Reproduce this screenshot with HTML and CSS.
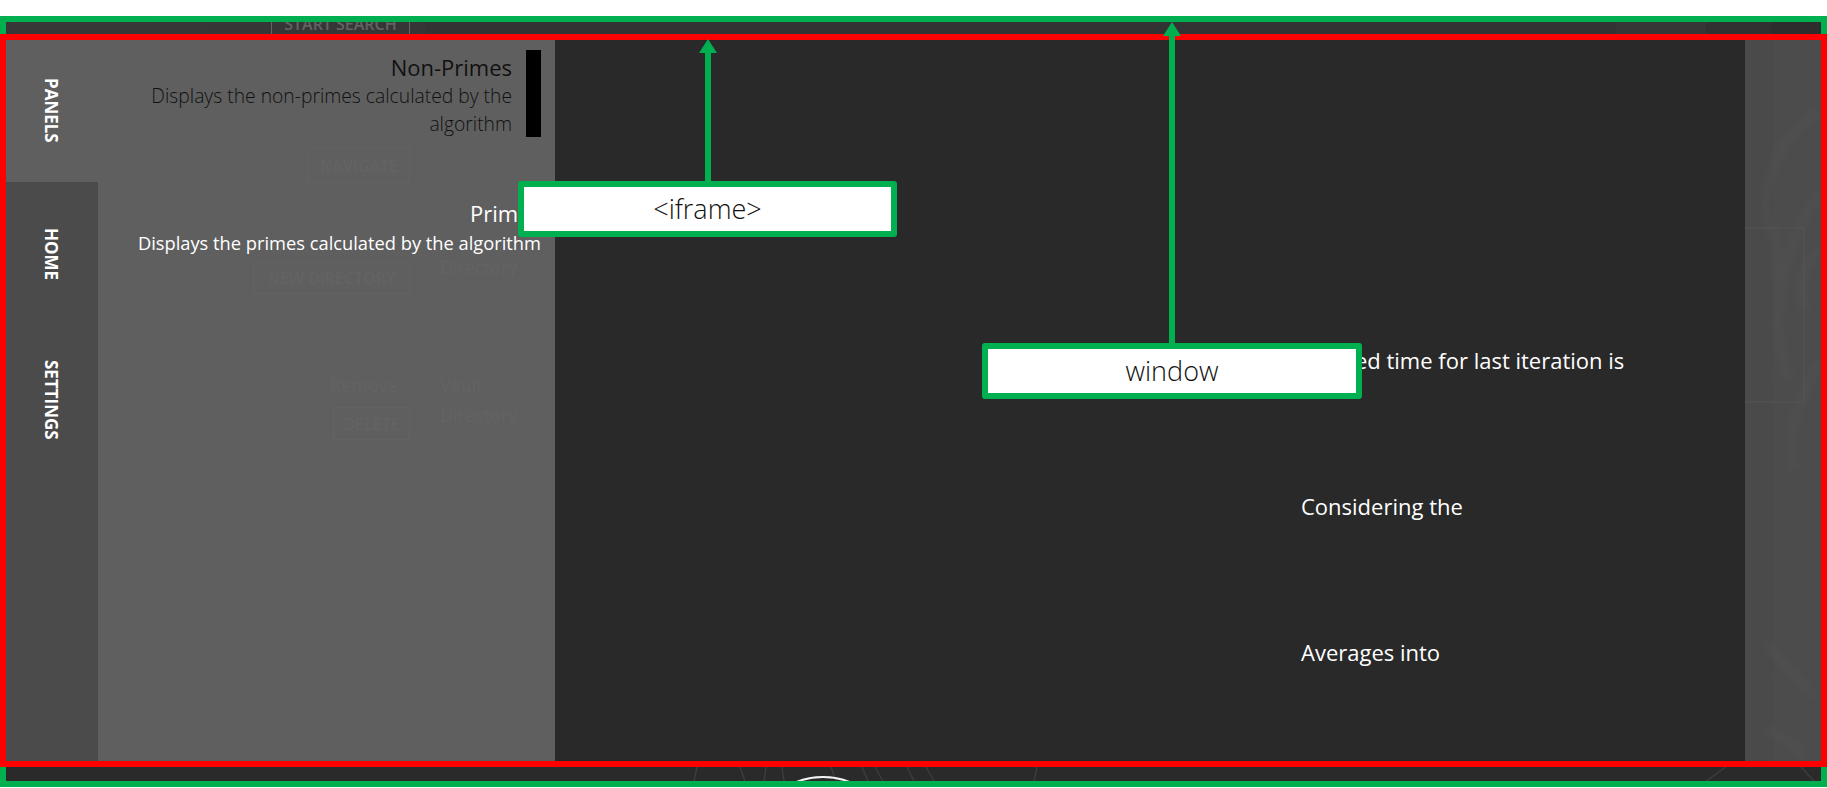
FILE: index.html
```html
<!DOCTYPE html>
<html lang="en">
<head>
  <meta charset="UTF-8">
  <meta name="viewport" content="width=device-width, initial-scale=1.0">
  <title>iframe inside window</title>
  <link rel="stylesheet" href="styles.css">
</head>
<body>

<div class="window">
  <div class="top-strip">
    <span class="ghost-btn search-btn">START SEARCH</span>
  </div>

  <div class="frame">
    <nav class="rail">
      <div class="tab tab-panels">PANELS</div>
      <div class="tab tab-home">HOME</div>
      <div class="tab tab-settings">SETTINGS</div>
    </nav>

    <section class="panel">
      <!-- page behind the panel shows through faintly -->
      <span class="ghost-btn ghost-navigate">NAVIGATE</span>
      <span class="ghost-btn ghost-newdir">NEW DIRECTORY</span>
      <span class="ghost ghost-dir1">Directory</span>
      <span class="ghost ghost-remove">Remove</span>
      <span class="ghost ghost-vault">Vault</span>
      <span class="ghost-btn ghost-delete">DELETE</span>
      <span class="ghost ghost-dir2">Directory</span>

      <div class="item item-active">
        <h2>Non-Primes</h2>
        <p>Displays the non-primes calculated by the algorithm</p>
      </div>
      <div class="item item-plain">
        <h2>Primes</h2>
        <p>Displays the primes calculated by the algorithm</p>
      </div>
    </section>

    <main class="main">
      <p>Elapsed time for last iteration is</p>
      <p>Considering the</p>
      <p>Averages into</p>
    </main>

    <aside class="side">
      <div class="side-box"></div>
      <svg class="smoke" width="76" height="721" viewBox="0 0 76 721" fill="none">
        <g stroke="#5c5e5d" stroke-width="5" opacity="0.35">
          <path d="M76 70C50 85 30 110 22 150S40 190 30 240" />
          <path d="M76 150C60 175 50 190 40 230S30 300 44 340" />
          <path d="M76 210C60 220 50 240 60 270" />
          <path d="M76 320C60 350 40 380 48 430" />
          <path d="M20 600C35 620 50 640 70 655" />
          <path d="M20 690C35 695 50 705 60 721" />
        </g>
      </svg>
    </aside>
  </div>

  <div class="bottom-strip">
    <svg class="bottom-art" width="1815" height="14" viewBox="0 0 1815 14" fill="none">
      <g stroke="#3a3e3e" stroke-width="1.5">
        <path d="M691 0L688 14" />
        <path d="M734 0L739 14" />
        <path d="M760 0L758 14" />
        <path d="M776 0L778 14" />
        <path d="M825 0L830 14" />
        <path d="M856 0L862 14" />
        <path d="M869 0L877 14" />
        <path d="M901 0L908 14" />
        <path d="M920 0L928 14" />
        <path d="M1031 0L1028 14" />
        <path d="M1720 0L1700 14" />
        <path d="M1795 0L1808 14" />
      </g>
      <circle cx="817" cy="80" r="70" stroke="#f2f2f2" stroke-width="2" />
    </svg>
  </div>

  <div class="callout callout-iframe">&lt;iframe&gt;</div>
  <div class="callout callout-window">window</div>
</div>

</body>
</html>
```

FILE: styles.css
```css
html, body {
  margin: 0;
  height: 100%;
  background-color: #ffffff;
  overflow: hidden;
}

body {
  padding-top: 16px;
  box-sizing: border-box;
  font-family: "Open Sans", "Noto Sans", sans-serif;
}

.window {
  position: relative;
  height: 771px;
  box-sizing: border-box;
  border: 6px solid #00b050;
  background-color: #2a2a2a;
}

.top-strip {
  position: relative;
  height: 12px;
  overflow: hidden;
  background: linear-gradient(to right, #373737 0, #363636 420px, #333333 420px, #333333 1610px, #363636 1610px, #363636 1700px, #313131 1700px, #313131 1765px, #2d2d2d 1765px);
}

.search-btn {
  left: 265px;
  top: -32px;
  width: 139px;
  height: 60px;
  padding-top: 8px;
  border-color: #444444;
  color: #474747;
  font-size: 20px;
}

.frame {
  display: flex;
  height: 733px;
  margin: 0 -6px;
  box-sizing: border-box;
  border: 6px solid #ff0000;
  background-color: #292929;
}

/* side tabs */
.rail {
  flex: 0 0 92px;
  background-color: #4b4b4b;
}

.tab {
  display: flex;
  align-items: center;
  width: 100%;
  box-sizing: border-box;
  padding-right: 2px;
  writing-mode: vertical-rl;
  color: #ffffff;
  font-size: 17px;
  font-weight: 700;
  line-height: 20px;
}

.tab-panels {
  height: 142px;
  padding-top: 38px;
  background-color: #5f5f5f;
}

.tab-home {
  padding-top: 46px;
}

.tab-settings {
  padding-top: 80px;
}

/* panel list */
.panel {
  position: relative;
  flex: 0 0 457px;
  box-sizing: border-box;
  padding: 10px 14px 0 0;
  background-color: #5f5f5f;
  text-align: right;
}

.item {
  position: relative;
}

.item h2 {
  margin: 0;
  font-size: 22px;
  font-weight: 400;
  line-height: 32px;
  padding-top: 1px;
}

.item p {
  margin: 0;
  font-size: 19.3px;
  font-weight: 300;
  line-height: 28px;
}

.item-active {
  height: 87px;
  margin-left: 40px;
  box-sizing: border-box;
  padding-right: 14px;
  border-right: 15px solid #000000;
  color: #111111;
}

.item-active p {
  margin-top: -1px;
}

.item-plain {
  margin-top: 59px;
  color: #ffffff;
}

.item-plain p {
  font-size: 18.3px;
  font-weight: 400;
}

.ghost, .ghost-btn {
  position: absolute;
  color: #636363;
  white-space: nowrap;
}

.ghost {
  font-size: 18px;
  line-height: 24px;
}

.ghost-btn {
  display: flex;
  align-items: center;
  justify-content: center;
  box-sizing: border-box;
  border: 1px solid #636363;
  font-size: 16px;
  font-weight: 600;
}

.ghost-navigate { left: 210px; top: 108px; width: 102px; height: 35px; }
.ghost-newdir { left: 155px; top: 222px; width: 157px; height: 32px; }
.ghost-dir1 { left: 342px; top: 215px; }
.ghost-remove { left: 232px; top: 333px; }
.ghost-vault { left: 342px; top: 333px; }
.ghost-delete { left: 235px; top: 367px; width: 77px; height: 33px; }
.ghost-dir2 { left: 342px; top: 363px; }

/* middle area */
.main {
  flex: 1;
  display: flex;
  flex-direction: column;
  gap: 118px;
  padding: 306px 0 0 746px;
  color: #ffffff;
  font-size: 22px;
  line-height: 28px;
}

.main p {
  margin: 0;
  white-space: nowrap;
}

.side {
  position: relative;
  flex: 0 0 76px;
  overflow: hidden;
  background: linear-gradient(to right, #4a4a4a 0, #4a4a4a 28px, #4c4c4c 28px);
}

.side-box {
  position: absolute;
  left: -20px;
  top: 187px;
  width: 76px;
  height: 172px;
  border: 2px solid #505050;
}

.smoke {
  position: absolute;
  left: 0;
  top: 0;
  filter: blur(4px);
}

.bottom-strip {
  height: 14px;
}

.bottom-art {
  display: block;
}

/* green annotation labels */
.callout {
  position: absolute;
  box-sizing: border-box;
  height: 56px;
  border: 6px solid #00b050;
  border-radius: 3px;
  background-color: #ffffff;
  color: #111111;
  font-size: 27px;
  font-weight: 300;
  line-height: 44px;
  text-align: center;
}

.callout::before {
  content: "";
  position: absolute;
  left: 50%;
  bottom: 100%;
  width: 6px;
  margin-left: -3px;
  margin-bottom: 6px;
  background-color: #00b050;
}

.callout::after {
  content: "";
  position: absolute;
  left: 50%;
  margin-left: -9px;
  border-left: 9px solid transparent;
  border-right: 9px solid transparent;
  border-bottom: 14px solid #00b050;
}

.callout-iframe {
  left: 512px;
  top: 159px;
  width: 379px;
}

.callout-iframe::before {
  height: 132px;
}

.callout-iframe::after {
  top: -148px;
}

.callout-window {
  left: 976px;
  top: 321px;
  width: 380px;
}

.callout-window::before {
  height: 310px;
}

.callout-window::after {
  top: -327px;
}
```
